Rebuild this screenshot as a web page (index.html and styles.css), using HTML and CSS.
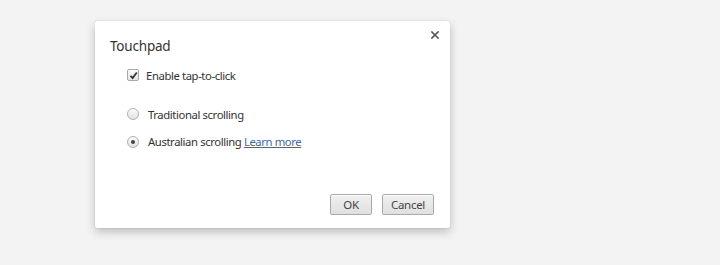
FILE: index.html
```html
<!DOCTYPE html>
<html>
<head>
<meta charset="utf-8">
<link rel="stylesheet" href="styles.css">
</head>
<body>
<div class="stage">
  <div class="dialog">
    <button class="close" aria-label="Close">
      <svg width="8" height="8" viewBox="0 0 8 8"><path d="M1 1L7 7M7 1L1 7" stroke="#555" stroke-width="1.6" stroke-linecap="square"/></svg>
    </button>
    <div class="title">Touchpad</div>
    <div class="body">
      <label class="row check-row">
        <span class="checkbox">
          <svg width="9" height="9" viewBox="0 0 9 9"><path d="M1.5 4.8L3.6 7L7.8 1.5" fill="none" stroke="#333" stroke-width="1.8"/></svg>
        </span>
        <span class="label">Enable tap-to-click</span>
      </label>
      <div class="radios">
        <label class="row">
          <span class="radio"></span>
          <span class="label">Traditional scrolling</span>
        </label>
        <label class="row">
          <span class="radio on"><span class="dot"></span></span>
          <span class="label">Australian scrolling <a class="link" href="#">Learn more</a></span>
        </label>
      </div>
    </div>
    <div class="actions">
      <button class="btn">OK</button>
      <button class="btn">Cancel</button>
    </div>
  </div>
</div>
</body>
</html>
```
FILE: styles.css
```css
html, body {
  margin: 0;
  padding: 0;
  background: #f3f3f3;
  width: 720px;
  height: 265px;
  overflow: hidden;
  font-family: "Noto Sans", "Open Sans", sans-serif;
  color: #333;
}
.stage {
  padding: 21px 0 0 95px;
}
.dialog {
  position: relative;
  width: 355px;
  height: 207px;
  background: #fff;
  border-radius: 2px;
  box-shadow: 0 4px 10px rgba(0,0,0,0.22), 0 0 1px rgba(0,0,0,0.25);
  box-sizing: border-box;
  padding: 16px 0 0 15px;
  display: flex;
  flex-direction: column;
}
.close {
  position: absolute;
  top: 8px;
  right: 9px;
  width: 12px;
  height: 12px;
  padding: 2px;
  border: 0;
  background: none;
  display: flex;
  align-items: center;
  justify-content: center;
}
.title {
  font-size: 13.5px;
  line-height: 18px;
  letter-spacing: -0.2px;
  color: #333;
}
.body {
  padding: 12px 0 0 17px;
  font-size: 11.3px;
  letter-spacing: -0.4px;
}
.row {
  display: flex;
  align-items: center;
  height: 16px;
}
.checkbox {
  width: 10px;
  height: 10px;
  border: 1px solid #a8a8a8;
  border-radius: 2px;
  background: linear-gradient(#fafafa, #e6e6e6);
  display: flex;
  align-items: center;
  justify-content: center;
  margin-right: 7px;
}
.radios {
  padding-top: 23px;
  display: flex;
  flex-direction: column;
  gap: 11.5px;
}
.radio {
  width: 10px;
  height: 10px;
  border: 1px solid #b0b0b0;
  border-radius: 50%;
  background: linear-gradient(#fcfcfc, #e2e2e2);
  display: flex;
  align-items: center;
  justify-content: center;
  margin-right: 9px;
}
.dot {
  width: 4px;
  height: 4px;
  border-radius: 50%;
  background: #444;
}
.link {
  color: #3b6b96;
  text-decoration: underline;
}
.actions {
  margin-top: auto;
  display: flex;
  justify-content: flex-end;
  gap: 10px;
  padding: 0 16px 13px 0;
}
.btn {
  height: 21px;
  min-width: 42px;
  padding: 0 8px;
  border: 1px solid #a9a9a9;
  border-radius: 2px;
  background: linear-gradient(#f0f0f0, #e0e0e0);
  font-family: "Noto Sans", "Open Sans", sans-serif;
  font-size: 11.5px;
  letter-spacing: -0.3px;
  color: #444;
  box-shadow: inset 0 1px 0 #fff;
}
```
